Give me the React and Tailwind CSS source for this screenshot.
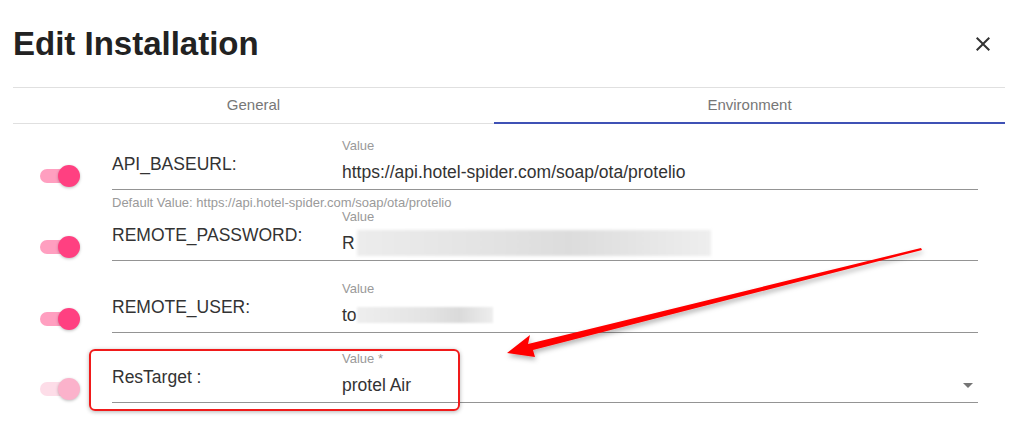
import React from "react";

function Toggle({ disabled }) {
  return (
    <div className="relative w-[40px] h-[22px]">
      <div
        className={
          "absolute left-0 top-[4px] w-[34px] h-[14px] rounded-full " +
          (disabled ? "bg-[#fddde8]" : "bg-[#ff9fc0]")
        }
      />
      <div
        className={
          "absolute left-[18px] top-0 w-[22px] h-[22px] rounded-full shadow-[0_1px_3px_rgba(0,0,0,0.25)] " +
          (disabled ? "bg-[#fbb2cb]" : "bg-[#ff4081]")
        }
      />
    </div>
  );
}

function Row({ label, small, disabled, children }) {
  return (
    <div className="flex">
      <div className="w-[112px] pl-[40px] pt-[26px]">
        <Toggle disabled={disabled} />
      </div>
      <div className="flex w-[866px] h-[51px] border-b border-[#949494]">
        <div className="w-[230px] flex items-center text-[17.5px] text-[#333]">{label}</div>
        <div className="flex-1 flex flex-col">
          <div className="h-[14px] leading-[14px] text-[13px] text-[#9a9a9a]">{small}</div>
          <div className="mt-[7px] h-[24px] leading-[24px] text-[17.5px] text-[#333] flex items-center">
            {children}
          </div>
        </div>
      </div>
    </div>
  );
}

export default function App() {
  return (
    <div className="relative w-[1020px] h-[439px] bg-white overflow-hidden font-['Liberation_Sans',Arial,sans-serif]">
      <div className="flex items-center justify-between h-[87px] pl-[13px] pr-[25px]">
        <h1 className="text-[33px] leading-[38px] font-bold text-[#222]">Edit Installation</h1>
        <svg width="24" height="24" viewBox="0 0 24 24" className="fill-[#333]">
          <path d="M19 6.41L17.59 5 12 10.59 6.41 5 5 6.41 10.59 12 5 17.59 6.41 19 12 13.41 17.59 19 19 17.59 13.41 12z" />
        </svg>
      </div>

      <div className="ml-[13px] mr-[15px] flex border-t border-[#e0e0e0]">
        <div className="w-[481px] h-[36px] border-b border-[#e0e0e0] flex items-center justify-center text-[15px] text-[#777]">
          General
        </div>
        <div className="flex-1 h-[36px] border-b-2 border-[#3f51b5] flex items-center justify-center text-[15px] text-[#777] pt-[1px]">
          Environment
        </div>
      </div>

      <div className="pt-[15px]">
        <Row label="API_BASEURL:" small="Value">
          https://api.hotel-spider.com/soap/ota/protelio
        </Row>
        <div className="ml-[112px] h-[20px] pt-[6px] leading-[14px] text-[13px] text-[#9a9a9a]">
          Default Value: https://api.hotel-spider.com/soap/ota/protelio
        </div>
        <Row label="REMOTE_PASSWORD:" small="Value">
          <span>R</span>
          <span className="ml-[2px] w-[354px] h-[26px] bg-[linear-gradient(90deg,#ececec,#e2e2e2_40%,#dcdcdc_60%,#eeeeee)] blur-[1.5px]" />
        </Row>
        <div className="h-[21px]" />
        <Row label="REMOTE_USER:" small="Value">
          <span>to</span>
          <span className="w-[136px] h-[16px] bg-[linear-gradient(90deg,#eeeeee,#e4e4e4_50%,#dadada_75%,#eeeeee)] blur-[1px]" />
        </Row>
        <div className="h-[19px]" />
        <Row label="ResTarget :" small="Value *" disabled>
          <div className="flex-1 flex items-center justify-between pr-[5px]">
            <span>protel Air</span>
            <span className="w-0 h-0 border-l-[5px] border-r-[5px] border-t-[5px] border-l-transparent border-r-transparent border-t-[#757575]" />
          </div>
        </Row>
      </div>

      <div className="absolute left-[89px] top-[349px] w-[371px] h-[62px] border-2 border-[#f01a1a] rounded-[6px] shadow-[0_1px_4px_rgba(0,0,0,0.3)] pointer-events-none" />

      <svg className="absolute left-0 top-0 pointer-events-none" width="1020" height="439">
        <defs>
          <filter id="sh" x="-10%" y="-10%" width="120%" height="140%">
            <feDropShadow dx="1" dy="3" stdDeviation="2.5" floodColor="#000" floodOpacity="0.3" />
          </filter>
        </defs>
        <polygon
          points="507,353 530,335 528,344 921,248 922,250 533,350 535,357"
          fill="#ff0000"
          filter="url(#sh)"
        />
      </svg>
    </div>
  );
}
